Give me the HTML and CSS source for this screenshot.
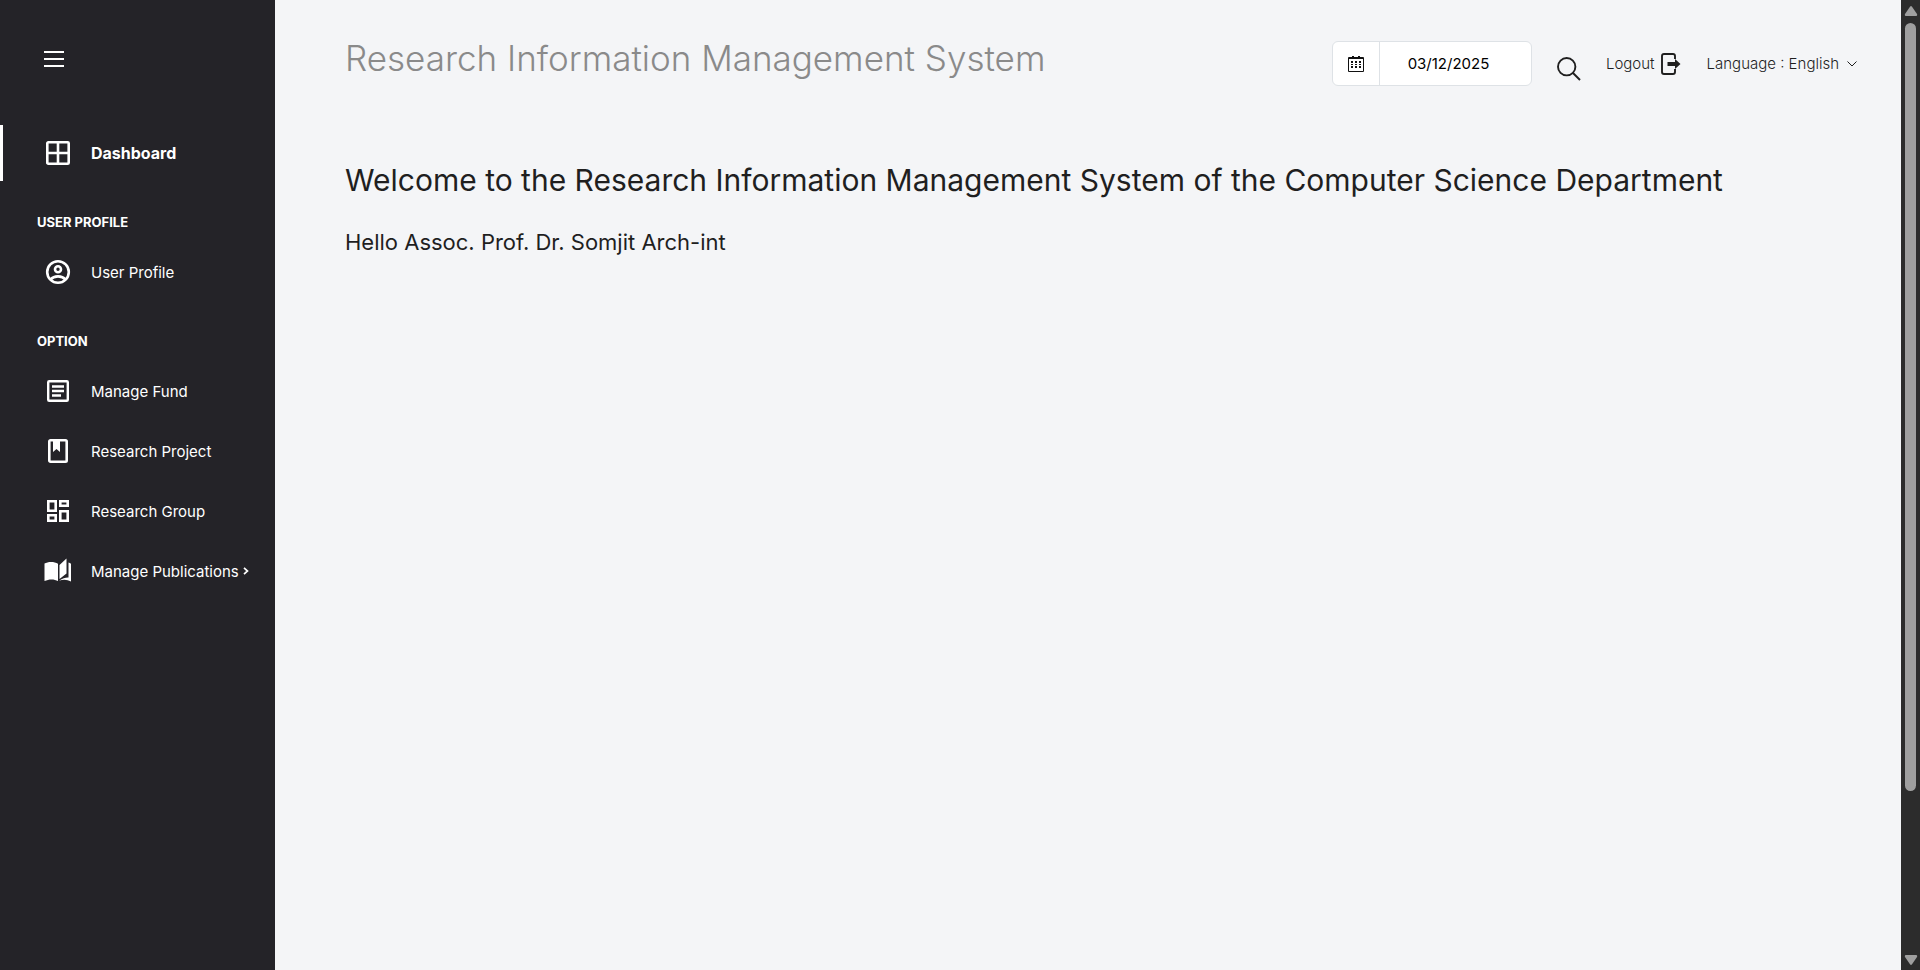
FILE: index.html
```html
<!DOCTYPE html>
<html lang="en">
<head>
<meta charset="utf-8">
<title>Research Information Management System</title>
<link rel="stylesheet" href="styles.css">
</head>
<body>
<nav class="sidebar" aria-label="Main">
  <button class="menu-toggle" type="button" aria-label="Toggle menu">
    <svg width="20" height="16" viewBox="0 0 20 16" fill="#fff"><path d="M0 0h20v2H0zM0 7h20v2H0zM0 14h20v2H0z"/></svg>
  </button>
  <a class="nav-item active" href="#">
    <svg class="nav-icon" viewBox="0 0 28 28" fill="none" stroke="#fff" stroke-width="2.6"><rect x="3.3" y="3.3" width="21.4" height="21.4" rx="1"/><path d="M14 3v22M3 14h22"/></svg>
    <span>Dashboard</span>
  </a>
  <h2 class="nav-heading">USER PROFILE</h2>
  <a class="nav-item" href="#">
    <svg class="nav-icon" viewBox="0 0 28 28" fill="none" stroke="#fff" stroke-width="2.6"><circle cx="14" cy="14" r="10.8"/><circle cx="14" cy="11.3" r="3"/><path d="M6.6 21.5c3.4-4.2 11.4-4.2 14.8 0"/></svg>
    <span>User Profile</span>
  </a>
  <h2 class="nav-heading">OPTION</h2>
  <a class="nav-item" href="#">
    <svg class="nav-icon" viewBox="0 0 28 28" fill="none" stroke="#fff" stroke-width="2.4"><rect x="4.2" y="4.2" width="19.6" height="19.6" rx="1"/><path d="M8 9.500h12M8 14h12M8 18.500h9"/></svg>
    <span>Manage Fund</span>
  </a>
  <a class="nav-item" href="#">
    <svg class="nav-icon" viewBox="0 0 28 28"><rect x="5.3" y="3.3" width="17.4" height="21.4" rx="1.2" fill="none" stroke="#fff" stroke-width="2.6"/><path d="M9 3h7v12l-3.500-3L9 15z" fill="#fff"/></svg>
    <span>Research Project</span>
  </a>
  <a class="nav-item" href="#">
    <svg class="nav-icon" viewBox="0 0 28 28" fill="none" stroke="#fff" stroke-width="2.6"><path d="M4.300 4.300h7.400v9.400H4.300zM16.300 4.300h7.400v4.400h-7.400zM4.300 18.300h7.400v5.400H4.300zM16.300 14.300h7.400v9.400h-7.400z"/></svg>
    <span>Research Group</span>
  </a>
  <a class="nav-item" href="#">
    <svg class="nav-icon" viewBox="0 0 28 28" fill="#fff"><path d="M.5 6.500C4 4.300 10.500 4.300 14 6.800V24c-3.500-2-9-2.200-13.500 0zM22.500 1.500v15L15.500 22V8zM24.500 5.500q1.500.5 2.500 1.200V24.500q-5.500-3-12-.8 5.500-3.500 9.500-3.200z"/></svg>
    <span>Manage Publications</span>
    <svg class="nav-arrow" width="6" height="8" viewBox="0 0 6 8" fill="none" stroke="#fff" stroke-width="1.700"><path d="M1 .8 4.500 4 1 7.200"/></svg>
  </a>
</nav>
<div class="page">
  <header class="topbar">
    <h1 class="brand">Research Information Management System</h1>
    <div class="tools">
      <div class="date-group">
        <label class="date-icon" for="date" aria-label="Date">
          <svg width="16" height="16" viewBox="0 0 16 16" fill="#111"><path fill-rule="evenodd" d="M1 1h14q1 0 1 1v13q0 1-1 1H1q-1 0-1-1V2Q0 1 1 1zM1 3v12h14V3z"/><path d="M4 0h2v3H4zM10 0h2v3h-2zM3 5h2v2H3zM7 5h2v2H7zM11 5h2v2h-2zM3 8h2v1H3zM7 8h2v1H7zM11 8h2v1h-2zM3 10h2v2H3zM7 10h2v2H7zM11 10h2v2h-2z"/></svg>
        </label>
        <input class="date-input" id="date" type="text" value="03/12/2025">
      </div>
      <button class="search" type="button" aria-label="Search">
        <svg width="24" height="24" viewBox="0 0 24 24" fill="none" stroke="#1f1f1f" stroke-width="1.900"><circle cx="9.700" cy="9.700" r="8.700"/><path d="m16 16 7 7"/></svg>
      </button>
      <a class="logout" href="#">Logout
        <svg width="20" height="22" viewBox="0 0 20 22" fill="none" stroke="#1f1f1f" stroke-width="1.900"><path d="M14 6V3q0-2-2-2H3Q1 1 1 3v16q0 2 2 2h9q2 0 2-2v-3"/><path d="M6.500 9H14V6l5.500 5-5.500 5v-3H6.500z" fill="#1f1f1f" stroke="none"/></svg>
      </a>
      <button class="language" type="button">Language : English
        <svg width="10" height="6" viewBox="0 0 10 6" fill="none" stroke="#1f1f1f"><path d="m.5.500 4.500 4.500L9.500.5"/></svg>
      </button>
    </div>
  </header>
  <main class="content">
    <h2 class="welcome">Welcome to the Research Information Management System of the Computer Science Department</h2>
    <p class="hello">Hello Assoc. Prof. Dr. Somjit Arch-int</p>
  </main>
</div>
<div class="scrollbar" aria-hidden="true">
  <svg width="14" height="10" viewBox="0 0 14 10" fill="#9f9f9f"><path d="M6 .7q1-1.200 2 0l5 7.300q.7 2-1 2H2Q.3 10 1 8z"/></svg>
  <div class="track"><div class="thumb"></div></div>
  <svg width="14" height="10" viewBox="0 0 14 10" fill="#9f9f9f"><path d="M6 9.300q1 1.200 2 0L13 2q.7-2-1-2H2Q.3 0 1 2z"/></svg>
</div>
</body>
</html>
```
FILE: styles.css
```css
* { box-sizing: border-box; }
body {
  margin: 0;
  min-height: 100vh;
  display: flex;
  background: #f4f5f7;
  color: #1f1f1f;
  font-family: Inter, "Open Sans", sans-serif;
  font-size: 15px;
}
h1, h2, p { margin: 0; font-weight: 400; }
a { color: inherit; text-decoration: none; }
button { border: 0; padding: 0; background: none; color: inherit; font: inherit; }
svg { display: block; flex: none; }

.sidebar {
  flex: none;
  width: 275px;
  background: #242328;
  color: #fff;
  display: flex;
  flex-direction: column;
}
.menu-toggle { margin: 51px 44px 58px; align-self: flex-start; }
.nav-item {
  display: flex;
  align-items: center;
  height: 56px;
  padding-left: 44px;
  white-space: nowrap;
}
.nav-item + .nav-item { margin-top: 4px; }
.nav-icon { width: 28px; height: 28px; margin-right: 19px; }
.nav-arrow { margin-left: 4px; }
.active { border-left: 3px solid #fff; padding-left: 41px; font-size: 16px; font-weight: 700; }
.nav-heading {
  padding: 32px 37px 13px;
  font-size: 13px;
  line-height: 18px;
  font-weight: 700;
}

.page { flex: 1; min-width: 0; padding: 36px 44px 0 70px; }
.topbar { display: flex; justify-content: space-between; align-items: flex-start; }
.brand { font-size: 35px; line-height: 44px; font-weight: 300; color: #8a8a8a; }
.tools { display: flex; align-items: center; padding-top: 5px; white-space: nowrap; }
.date-group {
  display: flex;
  width: 200px;
  height: 45px;
  border: 1px solid #dee2e6;
  border-radius: 6px;
  background: #fff;
}
.date-icon { display: flex; align-items: center; justify-content: center; width: 47px; border-right: 1px solid #dee2e6; }
.date-input {
  flex: 1;
  min-width: 0;
  border: 0;
  padding: 0 14px 0 0;
  background: none;
  color: #000;
  font: inherit;
  text-align: center;
}
.search { margin: 10px 25px 0 25px; }
.logout { display: flex; align-items: center; gap: 6px; font-weight: 300; }
.language { display: flex; align-items: center; gap: 8px; margin-left: 26px; font-weight: 300; }

.content { padding-top: 72px; }
.welcome { font-size: 30px; line-height: 44px; }
.hello { margin-top: 24px; font-size: 22px; line-height: 32px; }

.scrollbar {
  flex: none;
  width: 19px;
  padding: 6px 0 5px;
  background: #2c2c2c;
  display: flex;
  flex-direction: column;
  align-items: center;
  justify-content: space-between;
}
.track { flex: 1; width: 11px; padding: 7px 0; }
.thumb { height: 83%; border-radius: 6px; background: #9f9f9f; }
```
